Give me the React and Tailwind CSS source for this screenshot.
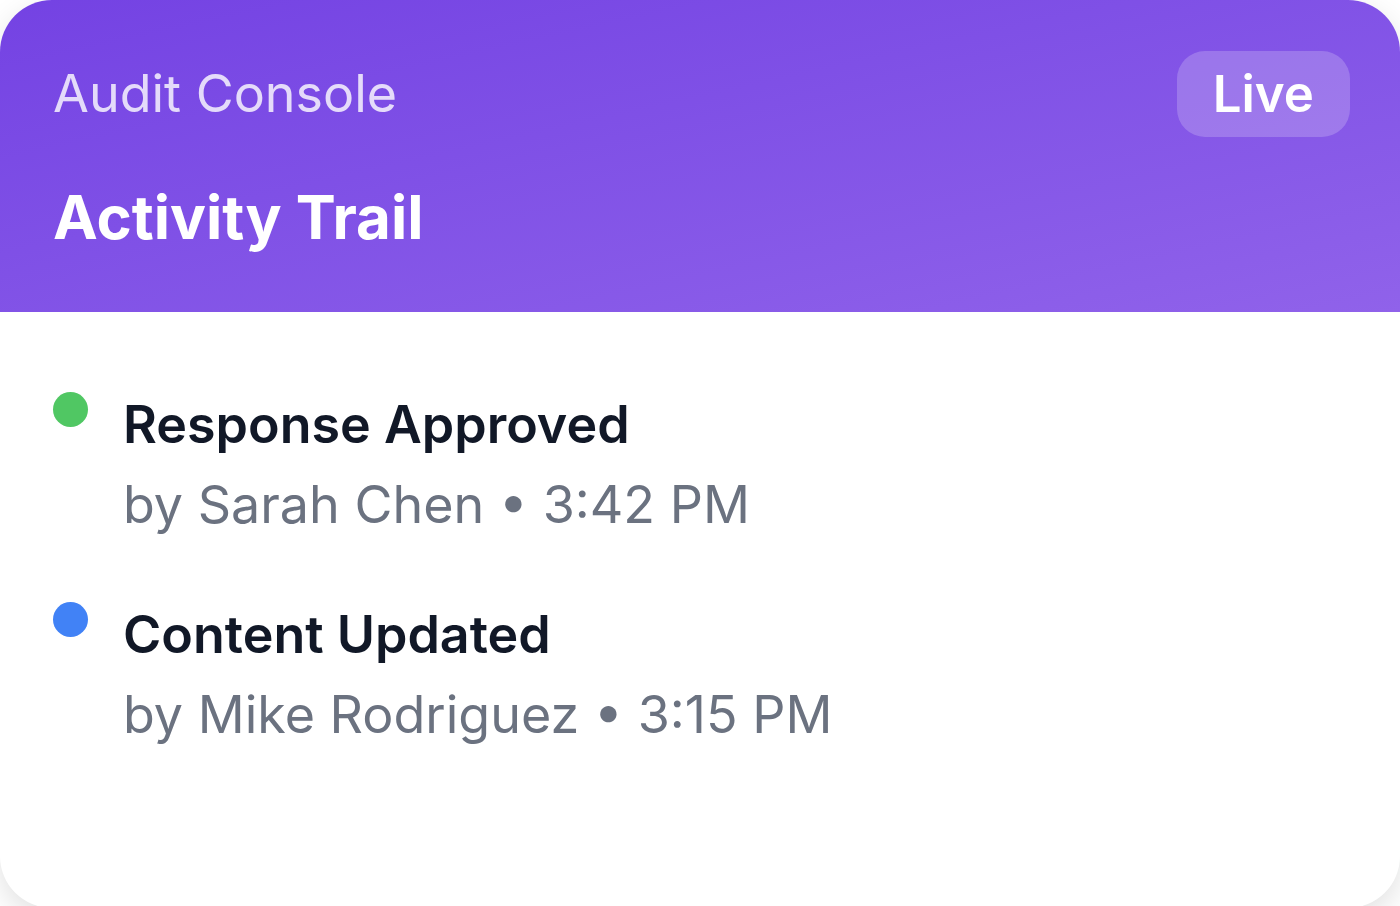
const events = [
  { title: 'Response Approved', who: 'Sarah Chen', time: '3:42 PM', dot: 'bg-[#50c763]' },
  { title: 'Content Updated', who: 'Mike Rodriguez', time: '3:15 PM', dot: 'bg-[#4182f6]' },
]

export default function App() {
  return (
    <div className="h-screen overflow-hidden bg-white font-['Inter',sans-serif]">
      <div className="h-[908px] w-full overflow-hidden rounded-[52px] bg-white shadow-[0_10px_30px_rgba(0,0,0,0.12)]">
        <div className="h-[312px] bg-linear-to-br from-[#7442e3] to-[#9062ea] pl-[53px] pr-[50px] pt-[51px]">
          <div className="flex items-center justify-between">
            <span className="text-[52px] leading-[80px] text-white/80">Audit Console</span>
            <span className="flex h-[86px] items-center rounded-[28px] bg-white/20 px-[36px] text-[51px] font-semibold text-white">
              Live
            </span>
          </div>
          <h1 className="mt-[41px] text-[60px] font-bold leading-[78px] text-white">Activity Trail</h1>
        </div>

        <div className="flex flex-col gap-[50px] pl-[53px] pt-[73px]">
          {events.map((e) => (
            <div key={e.title} className="flex items-start gap-[35px]">
              <span className={`mt-[7px] h-[35px] w-[35px] shrink-0 rounded-full ${e.dot}`} />
              <div>
                <div className="text-[52px] font-semibold leading-[80px] text-[#111827]">{e.title}</div>
                <div className="text-[52px] leading-[80px] text-[#6b7280]">
                  by {e.who} • {e.time}
                </div>
              </div>
            </div>
          ))}
        </div>
      </div>
    </div>
  )
}
